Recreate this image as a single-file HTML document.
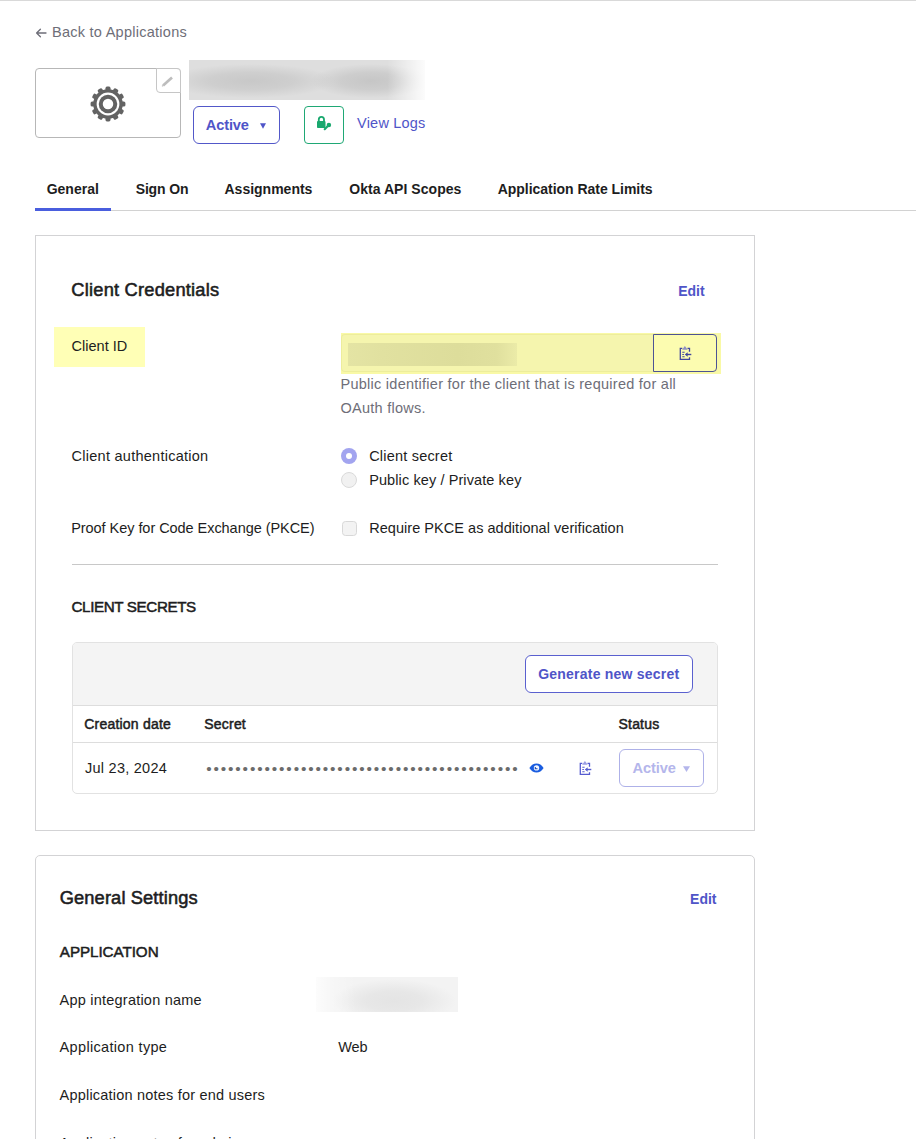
<!DOCTYPE html>
<html lang="en">
<head>
<meta charset="utf-8">
<title>Application - General</title>
<style>
html,body{margin:0;padding:0;background:#fff;}
body{width:916px;height:1139px;position:relative;overflow:hidden;font-family:"Liberation Sans",sans-serif;color:#1d1d21;font-size:14.5px;}
.abs{position:absolute;white-space:nowrap;line-height:1;box-sizing:border-box;}
svg{position:absolute;overflow:visible;}
.gray{color:#6e6e78;}
.link{color:#4f55c8;}
.b{font-weight:bold;}
.card{position:absolute;box-sizing:border-box;left:35px;width:720px;border:1px solid #d3d3d5;border-radius:5px;background:#fff;}
.tab{font-weight:bold;font-size:14px;color:#1d1d21;}
.lbl{font-size:14.5px;color:#1d1d21;}
.h2{font-weight:normal;font-size:18.3px;letter-spacing:0.21px;color:#1d1d21;-webkit-text-stroke:0.55px #1d1d21;}
.h3{font-weight:normal;font-size:15.2px;color:#1d1d21;-webkit-text-stroke:0.5px #1d1d21;}
.th{font-weight:normal;font-size:14px;color:#1d1d21;-webkit-text-stroke:0.5px #1d1d21;}
</style>
</head>
<body>
<div class="abs" style="left:0;top:0;width:916px;height:1px;background:#d9d9d9;"></div>

<!-- back link -->
<svg style="left:35px;top:26.5px;" width="12" height="12" viewBox="0 0 12 12"><path d="M11 6H1.6M5.4 2.2L1.6 6l3.8 3.8" fill="none" stroke="#6e6e78" stroke-width="1.3" stroke-linecap="round" stroke-linejoin="round"/></svg>
<div class="abs gray" id="back" style="left:52px;top:25.2px;font-size:14.5px;letter-spacing:0.26px;">Back to Applications</div>

<!-- logo box -->
<div class="abs" id="logobox" style="left:35px;top:68px;width:146px;height:70px;border:1px solid #b7b7b7;border-radius:4px;"></div>
<div class="abs" id="pencilbox" style="left:156px;top:68px;width:25px;height:25px;border:1px solid #c6c6c6;border-top-right-radius:4px;border-bottom-left-radius:4px;background:#fff;"></div>
<svg style="left:160px;top:74px;" width="16" height="16" viewBox="0 0 16 16"><path d="M3.100 11.400L12 3.400" stroke="#bdbdbd" stroke-width="2.700" stroke-linecap="butt" fill="none"/><path d="M2 12.400l1.100-1" stroke="#bdbdbd" stroke-width="1.200" fill="none"/></svg>
<!-- gear -->
<svg id="gear" style="left:89.850px;top:86.350px;" width="36" height="36" viewBox="-18.5 -18.5 37 37">
 <g fill="#636363">
  <circle r="15.2"/>
  <g id="teeth">
   <rect x="-2.6" y="-17.9" width="5.2" height="6" rx="1.6"/>
   <rect x="-2.6" y="-17.9" width="5.2" height="6" rx="1.6" transform="rotate(30)"/>
   <rect x="-2.6" y="-17.9" width="5.2" height="6" rx="1.6" transform="rotate(60)"/>
   <rect x="-2.6" y="-17.9" width="5.2" height="6" rx="1.6" transform="rotate(90)"/>
   <rect x="-2.6" y="-17.9" width="5.2" height="6" rx="1.6" transform="rotate(120)"/>
   <rect x="-2.6" y="-17.9" width="5.2" height="6" rx="1.6" transform="rotate(150)"/>
   <rect x="-2.6" y="-17.9" width="5.2" height="6" rx="1.6" transform="rotate(180)"/>
   <rect x="-2.6" y="-17.9" width="5.2" height="6" rx="1.6" transform="rotate(210)"/>
   <rect x="-2.6" y="-17.9" width="5.2" height="6" rx="1.6" transform="rotate(240)"/>
   <rect x="-2.6" y="-17.9" width="5.2" height="6" rx="1.6" transform="rotate(270)"/>
   <rect x="-2.6" y="-17.9" width="5.2" height="6" rx="1.6" transform="rotate(300)"/>
   <rect x="-2.6" y="-17.9" width="5.2" height="6" rx="1.6" transform="rotate(330)"/>
  </g>
 </g>
 <circle r="11.7" fill="#fff"/>
 <circle r="9.5" fill="#636363"/>
 <circle r="5.4" fill="#fff"/>
</svg>

<!-- blurred title -->
<div class="abs" id="blurtitle" style="left:189px;top:60px;width:236px;height:40px;background:linear-gradient(90deg,rgba(255,255,255,0) 0%,rgba(255,255,255,0) 84%,rgba(255,255,255,0.5) 93%,rgba(255,255,255,0.9) 100%),radial-gradient(ellipse 85px 17px at 62px 21px,rgba(200,200,200,1) 0%,rgba(200,200,200,0.7) 50%,rgba(200,200,200,0) 100%),radial-gradient(ellipse 60px 17px at 182px 21px,rgba(198,198,198,1) 0%,rgba(198,198,198,0.7) 50%,rgba(198,198,198,0) 100%),#dedede;"></div>

<!-- active button -->
<div class="abs" id="activebtn" style="left:193px;top:106px;width:87px;height:38px;border:1px solid #5258c9;border-radius:6px;"></div>
<div class="abs link b" id="activetxt" style="left:205.700px;top:117.6px;font-size:14.6px;letter-spacing:-0.1px;">Active</div>
<svg style="left:260px;top:122.5px;" width="6" height="6" viewBox="0 0 7 7"><path d="M0 0.3h7L3.5 6.8z" fill="#4f55c8"/></svg>

<!-- green button -->
<div class="abs" id="greenbtn" style="left:304px;top:106px;width:40px;height:38px;border:1.3px solid #1fa875;border-radius:4px;"></div>
<svg id="lock" style="left:316px;top:115px;" width="17" height="16" viewBox="0 0 17 16">
 <g fill="#19a86e" stroke="none">
  <path d="M1 7.100c0-.7.500-1.200 1.200-1.200h6.100c.7 0 1.200.5 1.200 1.200v4.800c0 .7-.5 1.200-1.200 1.200H2.200c-.7 0-1.200-.5-1.200-1.200z"/>
  <path d="M1.900 6.500V4.400a3.500 3.500 0 0 1 7 0V6.500H7.100V4.400a1.700 1.700 0 0 0-3.400 0V6.500z"/>
  <circle cx="12.900" cy="10" r="2.250"/>
 </g>
 <path d="M12.600 10.300L8.700 14.200" stroke="#19a86e" stroke-width="2.100" stroke-linecap="round" fill="none"/>
</svg>
<div class="abs link" id="viewlogs" style="left:357.1px;top:115.9px;font-size:14.5px;letter-spacing:0.2px;">View Logs</div>

<!-- tabs -->
<div class="abs tab" id="t1" style="left:46.700px;top:181.8px;">General</div>
<div class="abs tab" id="t2" style="left:135.700px;top:181.800px;letter-spacing:-0.15px;">Sign On</div>
<div class="abs tab" id="t3" style="left:224.500px;top:181.8px;">Assignments</div>
<div class="abs tab" id="t4" style="left:349.200px;top:181.8px;letter-spacing:0.05px;">Okta API Scopes</div>
<div class="abs tab" id="t5" style="left:497.700px;top:181.8px;letter-spacing:-0.03px;">Application Rate Limits</div>
<div class="abs" style="left:35px;top:210px;width:881px;height:1px;background:#d2d2d2;"></div>
<div class="abs" style="left:35px;top:208px;width:76px;height:3px;background:#4a5ede;"></div>

<!-- CARD 1 -->
<div class="card" id="card1" style="top:235px;height:596px;border-radius:0;"></div>
<div class="abs h2" id="cc" style="left:71.300px;top:281.300px;">Client Credentials</div>
<div class="abs link b" id="edit1" style="left:678.200px;top:284px;font-size:14px;">Edit</div>

<div class="abs" id="cidhl" style="left:54px;top:327px;width:91px;height:40px;background:#ffffb6;"></div>
<div class="abs lbl" id="cid" style="left:71.600px;top:339px;letter-spacing:0px;">Client ID</div>

<!-- client id input (highlighted) -->
<div class="abs" id="inphl" style="left:341px;top:333px;width:380px;height:41px;background:#f9f9a6;"></div>
<div class="abs" id="inp" style="left:341px;top:334px;width:313px;height:38px;background:#f5f5ae;border:1px solid #eded9c;border-right:none;border-radius:4px 0 0 4px;"></div>
<div class="abs" id="inpblur" style="left:348px;top:343px;width:169px;height:23px;background:linear-gradient(90deg,#e4e4a4 0%,#e1e1a0 20%,#dddd9b 65%,#e0e09e 88%,#ebeba8 100%);"></div>
<div class="abs" id="copybtn" style="left:653px;top:334px;width:64px;height:38px;background:#fcfcb0;border:1px solid #4d5394;border-radius:0 4px 4px 0;"></div>
<svg id="clip1" style="left:679px;top:345px;" width="13" height="16" viewBox="0 0 13 16">
 <path d="M3.300 3.400H1.300V14.400H10.500V12.200M10.500 6.700V3.400H8.500" fill="none" stroke="#41469f" stroke-width="1.300" stroke-linejoin="miter"/>
 <path d="M5.900 0.900L8.700 4.700H3.100z" fill="#8f8fc4"/>
 <path d="M3.300 7.200h2.300M3.300 9.500h1.600M3.300 11.800h2.300" stroke="#41469f" stroke-width="1.100" fill="none"/>
 <path d="M12.300 9.500H7.500" stroke="#41469f" stroke-width="1.400" fill="none"/>
 <path d="M5.800 9.500L8.600 7.200V11.800z" fill="#41469f"/>
</svg>

<div class="abs gray" id="d1" style="left:340.500px;top:377.400px;font-size:14.5px;letter-spacing:0.26px;">Public identifier for the client that is required for all</div>
<div class="abs gray" id="d2" style="left:340.500px;top:401.400px;font-size:14.5px;letter-spacing:0.26px;">OAuth flows.</div>

<div class="abs lbl" id="ca" style="left:71.600px;top:448.600px;letter-spacing:0.26px;">Client authentication</div>
<!-- radios -->
<div class="abs" id="rad1" style="left:341px;top:448px;width:16px;height:16px;border-radius:50%;background:#a2a4ef;"></div>
<div class="abs" style="left:346px;top:453px;width:6px;height:6px;border-radius:50%;background:#fff;"></div>
<div class="abs" id="rad2" style="left:341px;top:472px;width:16px;height:16px;border-radius:50%;background:#f1f1f1;border:1px solid #dadada;"></div>
<div class="abs lbl" id="r1" style="left:369.200px;top:449.200px;letter-spacing:0.2px;">Client secret</div>
<div class="abs lbl" id="r2" style="left:369.200px;top:472.800px;letter-spacing:0.1px;">Public key / Private key</div>

<div class="abs lbl" id="pk" style="left:71.200px;top:520.900px;letter-spacing:-0.05px;">Proof Key for Code Exchange (PKCE)</div>
<div class="abs" id="chk" style="left:341.500px;top:520.500px;width:15.500px;height:15.500px;border-radius:3.500px;background:#f3f3f3;border:1px solid #d8d8d8;"></div>
<div class="abs lbl" id="pk2" style="left:369.200px;top:521px;letter-spacing:0.04px;">Require PKCE as additional verification</div>

<div class="abs" style="left:72px;top:564px;width:646px;height:1px;background:#c8c8c8;"></div>
<div class="abs h3" id="cs" style="left:71.500px;top:599.100px;letter-spacing:-0.38px;">CLIENT SECRETS</div>

<!-- secrets table -->
<div class="abs" id="tbl" style="left:72px;top:642px;width:646px;height:152px;border:1px solid #e2e2e2;border-radius:5px;"></div>
<div class="abs" id="tblhead" style="left:73px;top:643px;width:644px;height:62px;background:#f4f4f4;border-radius:4px 4px 0 0;"></div>
<div class="abs" style="left:73px;top:705px;width:644px;height:1px;background:#dddddd;"></div>
<div class="abs" style="left:73px;top:742px;width:644px;height:1px;background:#dddddd;"></div>
<div class="abs" id="genbtn" style="left:525px;top:655px;width:168px;height:38px;border:1px solid #5a60cf;border-radius:6px;background:#fff;"></div>
<div class="abs link b" id="gentxt" style="left:538.200px;top:666.800px;font-size:14px;letter-spacing:0.22px;">Generate new secret</div>
<div class="abs th" id="h1" style="left:84.300px;top:717.200px;letter-spacing:0.2px;">Creation date</div>
<div class="abs th" id="h2" style="left:204.300px;top:717.200px;letter-spacing:0.2px;">Secret</div>
<div class="abs th" id="h3" style="left:618.500px;top:717.200px;letter-spacing:0.2px;">Status</div>
<div class="abs lbl" id="date" style="left:85px;top:761.200px;letter-spacing:0.25px;">Jul 23, 2024</div>
<div class="abs" id="dots" style="left:206.200px;top:760.800px;font-size:15.500px;letter-spacing:1.860px;color:#6b6b6b;">•••••••••••••••••••••••••••••••••••••••••••</div>

<!-- eye -->
<svg id="eye" style="left:529px;top:763px;" width="15" height="10" viewBox="0 0 15 10">
 <path d="M0.400 4.900C2.300 1.700 4.800 0.400 7.500 0.400s5.200 1.300 7.100 4.500C12.700 8.100 10.200 9.400 7.500 9.400S2.300 8.100 0.400 4.900z" fill="#1a5de0"/>
 <circle cx="7.500" cy="4.900" r="2.700" fill="#f4f8ff"/>
 <path d="M6.300 3.900v1.900h2.200" stroke="#1a47b8" stroke-width="1.100" fill="none"/>
</svg>
<!-- clipboard 2 -->
<svg id="clip2" style="left:579px;top:760px;" width="13" height="16" viewBox="0 0 13 16">
 <path d="M3.300 3.400H1.300V14.400H10.500V12.200M10.500 6.700V3.400H8.500" fill="none" stroke="#555bd0" stroke-width="1.300" stroke-linejoin="miter"/>
 <path d="M5.900 0.900L8.700 4.700H3.100z" fill="#9b9ee4"/>
 <path d="M3.300 7.200h2.300M3.300 9.500h1.600M3.300 11.800h2.300" stroke="#555bd0" stroke-width="1.100" fill="none"/>
 <path d="M12.300 9.500H7.500" stroke="#555bd0" stroke-width="1.400" fill="none"/>
 <path d="M5.800 9.500L8.600 7.200V11.800z" fill="#555bd0"/>
</svg>
<!-- status button -->
<div class="abs" id="stbtn" style="left:619px;top:749px;width:85px;height:38px;border:1px solid #aeb1e8;border-radius:6px;background:#fff;"></div>
<div class="abs b" id="sttxt" style="left:632.500px;top:760.500px;font-size:14.600px;letter-spacing:-0.100px;color:#b4b6eb;">Active</div>
<svg style="left:682.500px;top:765.500px;" width="7" height="6" viewBox="0 0 7 6"><path d="M0 0.200h7L3.500 5.900z" fill="#b4b6eb"/></svg>

<!-- CARD 2 -->
<div class="card" id="card2" style="top:855px;height:400px;"></div>
<div class="abs h2" id="gs" style="left:59.700px;top:889.400px;letter-spacing:0.12px;">General Settings</div>
<div class="abs link b" id="edit2" style="left:690.100px;top:892.300px;font-size:14px;">Edit</div>
<div class="abs h3" id="app" style="left:59.800px;top:944.200px;letter-spacing:-0.05px;">APPLICATION</div>
<div class="abs lbl" id="g1" style="left:59.600px;top:992.500px;letter-spacing:0.22px;">App integration name</div>
<div class="abs" id="nameblur" style="left:316px;top:977px;width:142px;height:35px;background:linear-gradient(90deg,rgba(255,255,255,0.75) 0%,rgba(255,255,255,0.3) 12%,rgba(255,255,255,0) 28%),radial-gradient(ellipse 62px 22px at 78px 24px,rgba(228,228,228,1) 0%,rgba(228,228,228,0.8) 45%,rgba(228,228,228,0) 100%),#f3f3f3;"></div>
<div class="abs lbl" id="g2" style="left:59.600px;top:1039.900px;letter-spacing:0.33px;">Application type</div>
<div class="abs lbl" id="g2v" style="left:338.200px;top:1039.900px;letter-spacing:-0.1px;">Web</div>
<div class="abs lbl" id="g3" style="left:59.600px;top:1087.900px;letter-spacing:0.2px;">Application notes for end users</div>
<div class="abs lbl" id="g4" style="left:59.600px;top:1135.900px;letter-spacing:0.2px;">Application notes for admins</div>

</body>
</html>
